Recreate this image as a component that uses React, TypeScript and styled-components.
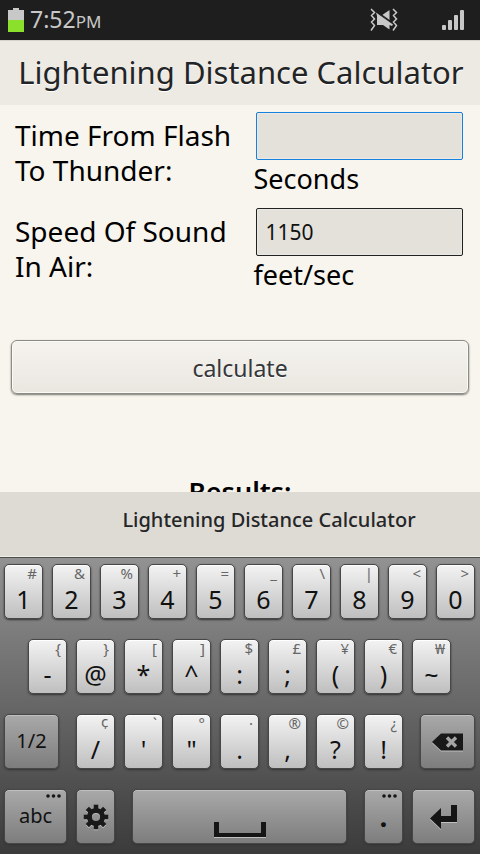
import React from "react";
import styled, { createGlobalStyle } from "styled-components";

const GlobalStyle = createGlobalStyle`
  * { box-sizing: border-box; }
  body { margin: 0; background: #f8f5ee; }
  body, button, input { font-family: "Noto Sans", "Open Sans", sans-serif; }
`;

const Screen = styled.div`
  display: flex;
  flex-direction: column;
  height: 100vh;
  overflow: hidden;
  background: #f8f5ee;
  color: #000;
`;

const StatusBar = styled.div`
  display: flex;
  flex: none;
  align-items: center;
  height: 40px;
  padding: 0 16px 0 8px;
  background: #1e1e1e;
  color: #c8c8c8;
`;

const Clock = styled.time`
  flex: 1;
  margin-left: 6px;
  font-size: 23px;
  line-height: 40px;
`;

const Meridiem = styled.span`
  font-size: 17px;
`;

const StatusIcons = styled.div`
  display: flex;
  align-items: center;
  gap: 44px;
`;

const Header = styled.header`
  flex: none;
  padding: 8px 16px 9px 18px;
  border-top: 1px solid #d6d3cc;
  background: #edeae3;
`;

const Title = styled.h1`
  margin: 0;
  font-size: 31px;
  font-weight: 400;
  line-height: 47px;
  text-align: center;
  white-space: nowrap;
  color: #222425;
  text-shadow: 0 1px 0 #fff;
`;

const Form = styled.form`
  flex: 1;
  min-height: 0;
  overflow: hidden;
`;

const Fields = styled.div`
  display: grid;
  grid-template-columns: minmax(0, 53fr) minmax(0, 47fr);
  row-gap: 10px;
  padding: 7px 15px 0;
`;

const FieldLabel = styled.label`
  padding-top: 6px;
  font-size: 28px;
  line-height: 35px;
`;

const FieldValue = styled.div`
  display: flex;
  flex-direction: column;
`;

const FieldInput = styled.input<{ $active?: boolean }>`
  height: 48px;
  min-width: 0;
  margin: 0 2px;
  padding: 0 9px;
  border: 1px solid ${(p) => (p.$active ? "#1680de" : "#222")};
  border-radius: 2px;
  outline: none;
  background: #e3e1da;
  box-shadow: inset 0 0 0 1px #ebe9e3;
  color: #111;
  font-size: 21px;
`;

const Unit = styled.span`
  font-size: 27px;
  line-height: 38px;
`;

const CalculateButton = styled.button`
  display: block;
  width: calc(100% - 22px);
  height: 54px;
  margin: 46px 11px 0;
  padding: 2px 0 0;
  border: 1px solid #8b8a83;
  border-radius: 6px;
  background: linear-gradient(#f5f3ed, #e9e7e0);
  box-shadow: inset 0 0 0 1px #fbfaf6, 0 1px 2px #77766f;
  color: #35373a;
  font-size: 23px;
  text-shadow: 0 1px 0 #fff;
`;

const ResultsHeading = styled.h2`
  margin: 78px 0 0;
  font-size: 27px;
  font-weight: 600;
  line-height: 40px;
  text-align: center;
`;

const Suggestions = styled.div`
  flex: none;
  padding: 8px 0 16px 58px;
  border-bottom: 1px solid #f0eee8;
  background: #dedbd4;
  text-align: center;
`;

const Suggestion = styled.button`
  display: block;
  width: 100%;
  padding: 0;
  border: 0;
  background: none;
  color: #252628;
  font-size: 20px;
  font-weight: 500;
  line-height: 40px;
  white-space: nowrap;
`;

const Keyboard = styled.div`
  display: flex;
  flex: none;
  flex-direction: column;
  gap: 20px;
  padding: 6px 0 10px;
  border-top: 1px solid #4c4c4c;
  background: linear-gradient(#929292, #3b3b3b);
`;

const KeyRow = styled.div`
  display: flex;
`;

const KeySpace = styled.span<{ $span: number }>`
  flex: ${(p) => p.$span} 1 0;
`;

const KeySlot = styled.div<{ $span: number }>`
  display: flex;
  flex: ${(p) => p.$span} 1 0;
  min-width: 0;
`;

const KeyCap = styled.button<{ $dark?: boolean }>`
  display: grid;
  flex: 1;
  grid-template-rows: 18px 35px;
  min-width: 0;
  height: 55px;
  margin: 0 5px 0 4px;
  padding: 0;
  border: 1px solid #474747;
  border-radius: 5px;
  background: ${(p) =>
    p.$dark ? "linear-gradient(#a9a9a9, #7d7d7d)" : "linear-gradient(#f3f3f3, #bfbfbf)"};
  box-shadow: inset 0 1px 0 ${(p) => (p.$dark ? "#c0c0c0" : "#fff")}, 0 1px 2px #333;
  color: #111;
`;

const KeyHint = styled.span`
  padding-right: 5px;
  font-size: 15px;
  line-height: 17px;
  text-align: right;
  color: #666;
`;

const KeyLabel = styled.span<{ $word?: boolean }>`
  font-size: ${(p) => (p.$word ? 20 : 25)}px;
  line-height: ${(p) => (p.$word ? 16 : 32)}px;
  text-align: center;
`;

const KeyIcon = styled.span<{ $low?: boolean }>`
  display: flex;
  grid-row: 1 / 3;
  align-items: ${(p) => (p.$low ? "flex-end" : "center")};
  justify-content: center;
  padding-bottom: ${(p) => (p.$low ? 5 : 0)}px;
  filter: drop-shadow(0 1px 0 #c0c0c0);
`;

const StopLabel = styled.span`
  font-size: 28px;
  font-weight: 700;
  line-height: 16px;
  text-align: center;
`;

const DotsHint = styled.span`
  display: flex;
  align-items: flex-start;
  justify-content: flex-end;
  padding: 4px 5px 0 0;
`;

function Dots() {
  return (
    <DotsHint>
      <svg width="15" height="4" viewBox="0 0 15 4" fill="#151515" aria-hidden="true">
        <circle cx="2" cy="2" r="1.8" />
        <circle cx="7.5" cy="2" r="1.8" />
        <circle cx="13" cy="2" r="1.8" />
      </svg>
    </DotsHint>
  );
}

function BatteryIcon() {
  return (
    <svg width="16" height="26" viewBox="0 0 16 26" aria-label="Battery">
      <path d="M5 1h6v2h5v10H0V3h5z" fill="#c8c8c8" />
      <path d="M0 13h16v12H0z" fill="#8be02c" />
    </svg>
  );
}

function MuteVibrateIcon() {
  return (
    <svg width="28" height="24" viewBox="0 0 28 24" aria-label="Vibrate">
      <path d="M11.5 7.5L19.500 2v11z" fill="#c8c8c8" />
      <path d="M6 4.500L23 16.500 22 18l-2.500-1v4.500L13 17H7V8z" fill="#c8c8c8" />
      <path d="M9.500 5.500L21 13.800" stroke="#1e1e1e" strokeWidth="1.200" />
      <path
        d="M1 1l3.500 3.500L1.500 7.500l3 3.500-3 3 3 3.500L1 22.500M23 1l3.500 3.500-3 3 3 3.500-3 3 3 3.500L23 22.500"
        fill="none"
        stroke="#c8c8c8"
        strokeWidth="1.5"
      />
    </svg>
  );
}

function SignalIcon() {
  return (
    <svg width="22" height="20" viewBox="0 0 22 20" fill="#c8c8c8" aria-label="Signal">
      <rect y="15" width="4" height="5" rx="1" />
      <rect x="6" y="10" width="4" height="10" rx="1" />
      <rect x="12" y="5" width="4" height="15" rx="1" />
      <rect x="18" width="4" height="20" rx="1" />
    </svg>
  );
}

function GearIcon() {
  const teeth = [0, 45, 90, 135, 180, 225, 270, 315];
  return (
    <svg width="26" height="26" viewBox="-13 -13 26 26" aria-hidden="true">
      {teeth.map((angle) => (
        <path key={angle} d="M-2.3-12.3h4.6V-7h-4.6z" fill="#191919" transform={`rotate(${angle})`} />
      ))}
      <circle r="6.6" fill="none" stroke="#191919" strokeWidth="5" />
    </svg>
  );
}

function BackspaceIcon() {
  return (
    <svg width="32" height="18" viewBox="0 0 32 18" aria-hidden="true">
      <path d="M0 9l9-8.5h22v17H9z" fill="#191919" />
      <path d="M15 4.5l9 9M24 4.5l-9 9" stroke="#a5a5a5" strokeWidth="3.4" />
    </svg>
  );
}

function SpaceIcon() {
  return (
    <svg width="52" height="16" viewBox="0 0 52 16" aria-hidden="true">
      <path d="M0 0h5v11h42V0h5v15H0z" fill="#151515" />
    </svg>
  );
}

function EnterIcon() {
  return (
    <svg width="28" height="26" viewBox="0 0 28 26" aria-hidden="true">
      <path d="M21 1h6v17H11v7L0 14.5 11 4v8h10z" fill="#151515" />
    </svg>
  );
}

interface SymbolKey {
  label: string;
  hint: string;
}

const digitKeys: SymbolKey[] = [
  { label: "1", hint: "#" },
  { label: "2", hint: "&" },
  { label: "3", hint: "%" },
  { label: "4", hint: "+" },
  { label: "5", hint: "=" },
  { label: "6", hint: "_" },
  { label: "7", hint: "\\" },
  { label: "8", hint: "|" },
  { label: "9", hint: "<" },
  { label: "0", hint: ">" },
];

const symbolKeys: SymbolKey[] = [
  { label: "-", hint: "{" },
  { label: "@", hint: "}" },
  { label: "*", hint: "[" },
  { label: "^", hint: "]" },
  { label: ":", hint: "$" },
  { label: ";", hint: "£" },
  { label: "(", hint: "¥" },
  { label: ")", hint: "€" },
  { label: "~", hint: "₩" },
];

const punctuationKeys: SymbolKey[] = [
  { label: "/", hint: "¢" },
  { label: "'", hint: "`" },
  { label: "\"", hint: "°" },
  { label: ".", hint: "·" },
  { label: ",", hint: "®" },
  { label: "?", hint: "©" },
  { label: "!", hint: "¿" },
];

interface KeyProps {
  span: number;
  dark?: boolean;
  name?: string;
  children: React.ReactNode;
}

function Key({ span, dark, name, children }: KeyProps) {
  return (
    <KeySlot $span={span}>
      <KeyCap type="button" $dark={dark} aria-label={name}>
        {children}
      </KeyCap>
    </KeySlot>
  );
}

function SymbolKeys({ keys }: { keys: SymbolKey[] }) {
  return (
    <>
      {keys.map((key) => (
        <Key key={key.label} span={48}>
          <KeyHint>{key.hint}</KeyHint>
          <KeyLabel>{key.label}</KeyLabel>
        </Key>
      ))}
    </>
  );
}

export default function App() {
  return (
    <Screen>
      <GlobalStyle />
      <StatusBar>
        <BatteryIcon />
        <Clock>
          7:52<Meridiem>PM</Meridiem>
        </Clock>
        <StatusIcons>
          <MuteVibrateIcon />
          <SignalIcon />
        </StatusIcons>
      </StatusBar>
      <Header>
        <Title>Lightening Distance Calculator</Title>
      </Header>
      <Form onSubmit={(event) => event.preventDefault()}>
        <Fields>
          <FieldLabel htmlFor="time">Time From Flash To Thunder:</FieldLabel>
          <FieldValue>
            <FieldInput id="time" type="text" inputMode="decimal" $active />
            <Unit>Seconds</Unit>
          </FieldValue>
          <FieldLabel htmlFor="speed">Speed Of Sound In Air:</FieldLabel>
          <FieldValue>
            <FieldInput id="speed" type="text" inputMode="decimal" defaultValue="1150" />
            <Unit>feet/sec</Unit>
          </FieldValue>
        </Fields>
        <CalculateButton type="submit">calculate</CalculateButton>
        <ResultsHeading>Results:</ResultsHeading>
      </Form>
      <Suggestions>
        <Suggestion type="button">Lightening Distance Calculator</Suggestion>
      </Suggestions>
      <Keyboard>
        <KeyRow>
          <SymbolKeys keys={digitKeys} />
        </KeyRow>
        <KeyRow>
          <KeySpace $span={24} />
          <SymbolKeys keys={symbolKeys} />
          <KeySpace $span={24} />
        </KeyRow>
        <KeyRow>
          <Key span={64} dark>
            <KeyHint />
            <KeyLabel $word>1/2</KeyLabel>
          </Key>
          <KeySpace $span={8} />
          <SymbolKeys keys={punctuationKeys} />
          <KeySpace $span={8} />
          <Key span={64} dark name="Backspace">
            <KeyIcon>
              <BackspaceIcon />
            </KeyIcon>
          </Key>
        </KeyRow>
        <KeyRow>
          <Key span={72} dark>
            <Dots />
            <KeyLabel $word>abc</KeyLabel>
          </Key>
          <Key span={48} dark name="Settings">
            <KeyIcon>
              <GearIcon />
            </KeyIcon>
          </Key>
          <KeySpace $span={8} />
          <Key span={224} dark name="Space">
            <KeyIcon $low>
              <SpaceIcon />
            </KeyIcon>
          </Key>
          <KeySpace $span={8} />
          <Key span={48} dark>
            <Dots />
            <StopLabel>.</StopLabel>
          </Key>
          <Key span={72} dark name="Enter">
            <KeyIcon>
              <EnterIcon />
            </KeyIcon>
          </Key>
        </KeyRow>
      </Keyboard>
    </Screen>
  );
}
